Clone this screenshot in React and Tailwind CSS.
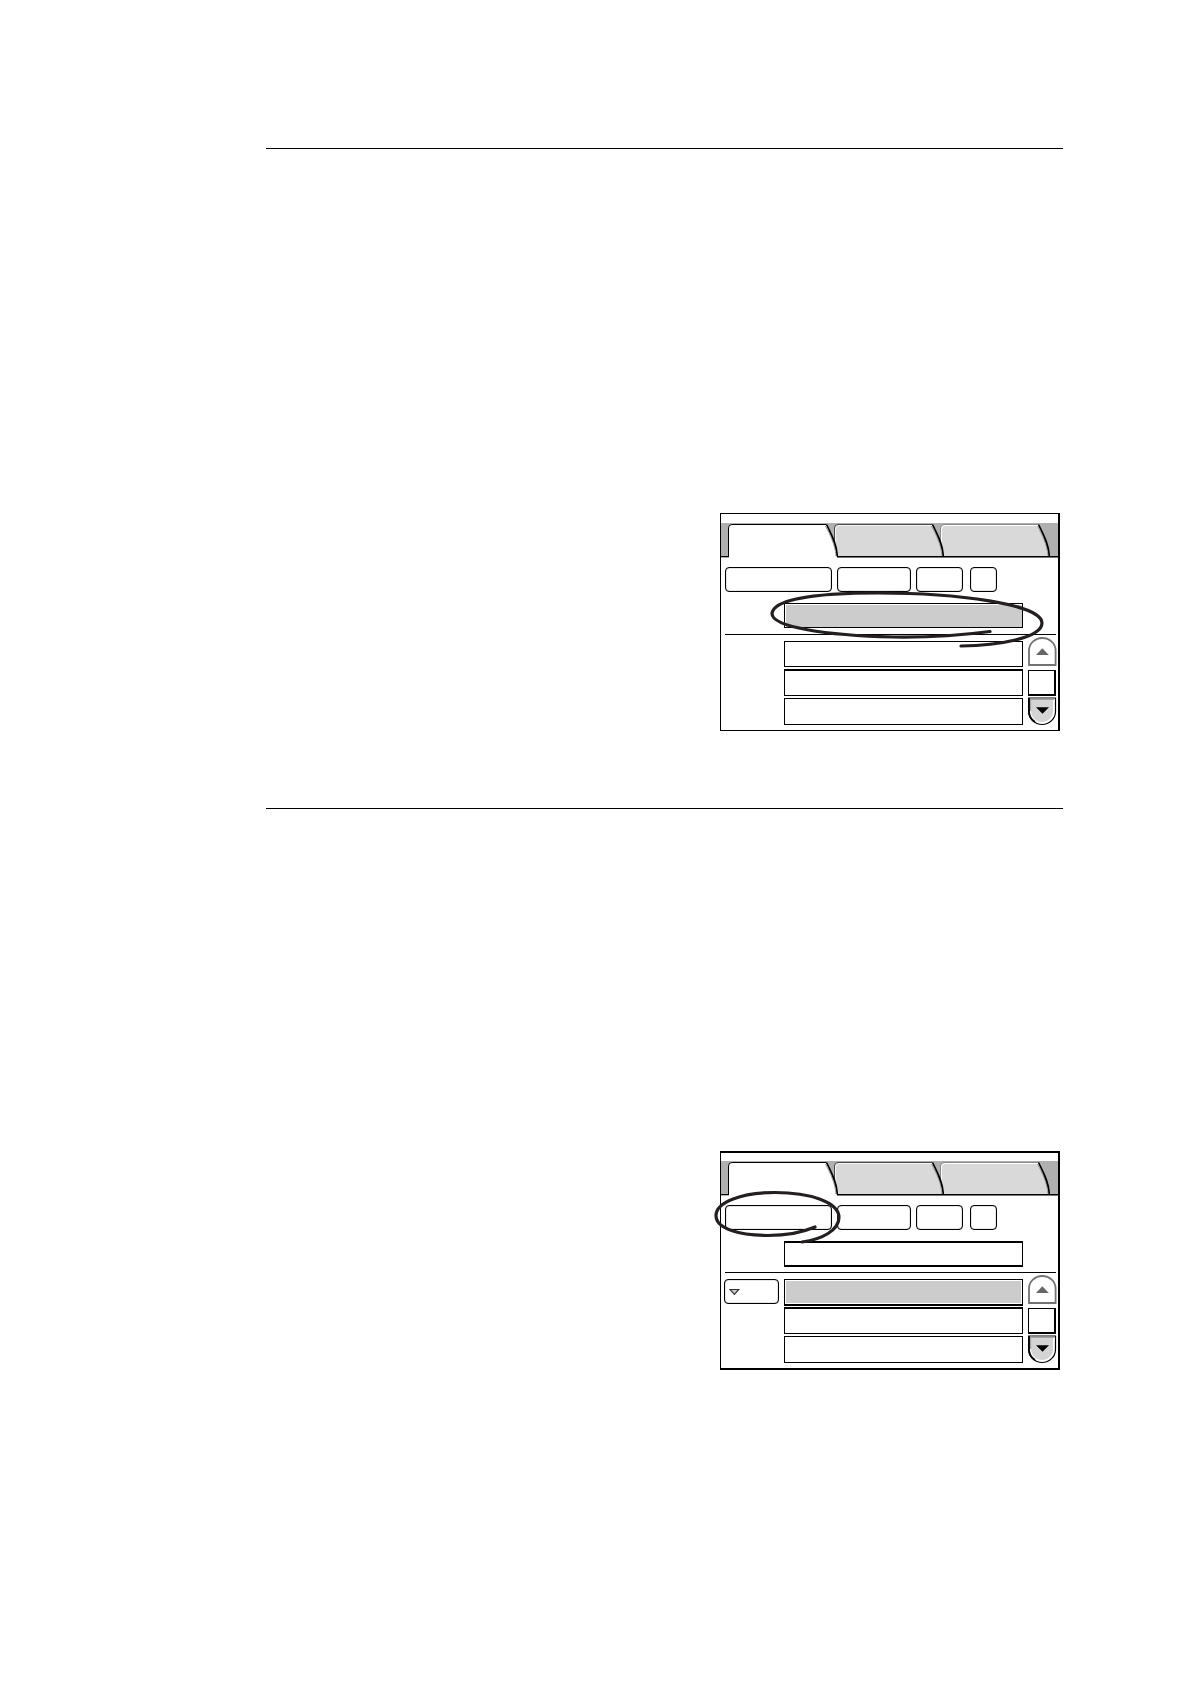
import React from 'react';

const tabs = [
  { name: 'First tab', layer: 'relative z-30', fill: '#ffffff', line: '#000000', shine: '#ffffff' },
  { name: 'Second tab', layer: 'relative z-20 -ml-1', fill: '#d9d9d9', line: '#4a4a4a', shine: '#f5f5f5' },
  { name: 'Third tab', layer: 'relative z-10 -ml-1', fill: '#d9d9d9', line: '#8a8a8a', shine: '#ffffff' }
];

const Tab = ({ tab, selected }) => (
  <button type="button" role="tab" aria-label={tab.name} aria-selected={selected} className={tab.layer}>
    <svg width="110" height="35" viewBox="0 0 110 35" className="block">
      <path
        d={`M0.5 ${selected ? 35 : 33} V5 Q0.5 1.5 4 1.5 H98.5 C103 11 109 21 109.5 ${selected ? 35 : 33} Z`}
        fill={tab.fill}
      />
      <path d="M1.5 33 V6 Q1.5 2.5 5 2.5 H98" fill="none" stroke={tab.shine} />
      <path d="M0.5 33.5 V5 Q0.5 1.5 4 1.5 H98.5" fill="none" stroke={tab.line} />
      <path d="M97.5 3 C102 12 107 21 108 33" fill="none" stroke="#9a9a9a" strokeWidth="1" />
      <path d="M98.5 1.5 C103 11 109 21 109.3 33.5" fill="none" stroke="#000" strokeWidth="1.6" />
    </svg>
  </button>
);

const TabBar = () => (
  <div role="tablist" className="relative flex h-[35px] bg-[#b0b0b0] pl-[7px]">
    {tabs.map((tab, index) => (
      <Tab key={tab.name} tab={tab} selected={index === 0} />
    ))}
    {/* Baseline runs under the inactive tabs only */}
    <svg className="absolute bottom-0 left-0 z-40 h-[2px] w-full" aria-hidden="true">
      <rect x="0" y="0" width="8" height="1" fill="#000" />
      <rect x="0" y="1" width="8" height="1" fill="#b0b0b0" />
      <rect x="116" y="0" width="100%" height="1" fill="#000" />
      <rect x="116" y="1" width="100%" height="1" fill="#777" />
    </svg>
  </div>
);

const Toolbar = () => (
  <div className="flex h-[25px] gap-[5px] pl-1">
    <button type="button" aria-label="Option one" className="w-[107px] rounded border border-black shadow-[inset_0_0_1px_black]" />
    <button type="button" aria-label="Option two" className="w-[74px] rounded border border-black shadow-[inset_0_0_1px_black]" />
    <button type="button" aria-label="Option three" className="w-[47px] rounded border border-black shadow-[inset_0_0_1px_black]" />
    <button type="button" aria-label="Option four" className="ml-[2px] w-[27px] rounded border border-black shadow-[inset_0_0_1px_black]" />
  </div>
);

const ScrollControls = () => (
  <div className="flex flex-col">
    <button type="button" aria-label="Scroll up">
      <svg width="29" height="29" viewBox="0 0 29 29" className="block">
        <path d="M1 28 V13.5 A13.3 12.5 0 0 1 27.6 13.5 V28 Z" fill="#fff" stroke="#737373" strokeWidth="1.8" />
        <path d="M8 18 L14.3 11.3 L20.8 18 Z" fill="#666" />
      </svg>
    </button>
    <div className="mt-1 h-[26px] w-7 border border-r-2 border-b-2 border-black" />
    <button type="button" aria-label="Scroll down" className="mt-px">
      <svg width="29" height="29" viewBox="0 0 29 29" className="block">
        <path d="M0.7 1 H27.5 V14.5 A13.4 13 0 0 1 0.7 14.5 Z" fill="#fff" stroke="#000" strokeWidth="1.2" />
        <path d="M3 2.5 H25 V14 A11 11 0 0 1 3 14 Z" fill="#d4d4d4" />
        <path d="M2.5 14 V2.3 H26" fill="none" stroke="#a3a3a3" strokeWidth="1.2" />
        <path d="M1 1 V14.5 A13.4 13 0 0 0 7 25" fill="none" stroke="#000" strokeWidth="1.8" />
        <path d="M8 10.3 H21 L14.5 16.7 Z" fill="#000" />
      </svg>
    </button>
  </div>
);

const Screen = ({ name, frame, header, field, rows, menu, callout }) => (
  <div aria-label={name} role="group" className={`relative mr-[3px] ml-auto w-full max-w-[340px] border-black bg-white ${frame}`}>
    <div className={header} />
    <TabBar />
    <div className="pt-[9px]">
      <Toolbar />
      <div className="mt-[11px] flex pr-[35px] pl-[63px]">
        <button type="button" aria-label="Selected field" className={`flex-1 border-black ${field}`} />
      </div>
      <hr className="mt-[6px] mr-[2px] ml-1 border-black" />
      <div className="flex pt-[2px] pr-px pb-1 pl-[3px]">
        <div className="w-[60px] pt-1">
          {menu && (
            <button
              type="button"
              aria-label="Open menu"
              className="flex h-[25px] w-[55px] items-center rounded border border-black pl-1 shadow-[inset_0_0_1px_black]"
            >
              <svg width="11" height="8" viewBox="0 0 11 8">
                <path d="M1 1.5 H9.8 L5.4 6.3 Z" fill="#ccc" stroke="#333" strokeWidth="1.2" />
              </svg>
            </button>
          )}
        </div>
        <div className="flex flex-1 flex-col pt-1">
          {rows.map((row, index) => (
            <button key={index} type="button" aria-label={`Row ${index + 1}`} className={`border-black ${row}`} />
          ))}
        </div>
        <div className="pl-[5px]">
          <ScrollControls />
        </div>
      </div>
    </div>
    {/* Hand drawn ring */}
    <svg className="pointer-events-none absolute top-0 left-0 z-50 h-full w-full overflow-visible" aria-hidden="true">
      <path d={callout} fill="none" stroke="#231f20" strokeWidth="3.2" strokeLinecap="round" />
    </svg>
  </div>
);

const ManualPage = () => {
  return (
    <main className="min-h-screen bg-white pt-[148px] pr-[127px] pb-[314px] pl-[266px]">
      <section>
        <hr className="border-black" />
        <div className="pt-[364px]">
          <Screen
            name="Field selection"
            frame="border border-r-2"
            header="h-[9px]"
            field="h-[25px] border bg-[#cccccc] shadow-[inset_1px_1px_0_white]"
            rows={['h-[26px] border', 'mt-[2px] h-[27px] border border-t-2', 'mt-[2px] h-[27px] border']}
            callout="M269 117.5 C235 122 205 123.5 172 123 C105 121.5 51 113 51 99.5 C52 85 95 79 157 79 C235 79 321 90 321 109 C321 124 277 131.5 240 132"
          />
        </div>
      </section>
      <section className="pt-[77px]">
        <hr className="border-black" />
        <div className="pt-[342px]">
          <Screen
            name="Key selection"
            frame="border-y-2 border-l border-r-2"
            header="h-2"
            field="h-[26px] border border-y-2 -mb-px"
            rows={[
              'h-[27px] border border-b-2 bg-[#cccccc] shadow-[inset_0_0_0_1px_white]',
              'mt-px h-[27px] border border-t-2',
              'mt-[2px] h-[27px] border'
            ]}
            menu
            callout="M94 74 C80 80 64 82.5 47 82.5 C19 82.5 -5 76 -5 62.5 C-5 49 21 39.5 54 39.5 C89 39.5 118 49 118 64.5 C118 77 101 86.5 81 89"
          />
        </div>
      </section>
    </main>
  );
};

export default ManualPage;
